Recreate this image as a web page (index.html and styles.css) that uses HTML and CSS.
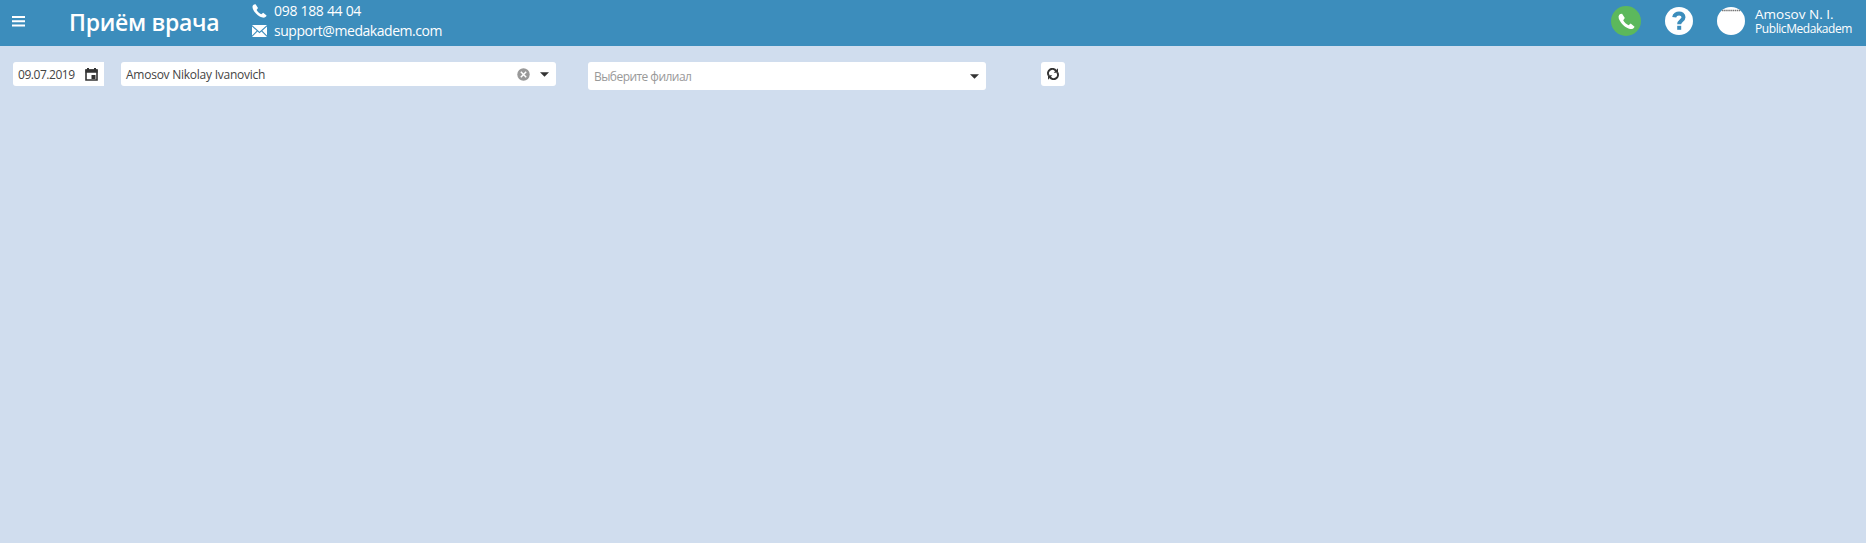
FILE: index.html
```html
<!DOCTYPE html>
<html lang="ru">
<head>
<meta charset="utf-8">
<title>Приём врача</title>
<link rel="stylesheet" href="styles.css">
</head>
<body>
<header class="topbar">
  <svg class="menu" viewBox="0 0 13 11"><path d="M0 1h13M0 5.300h13M0 9.600h13" stroke="#fff" stroke-width="2"/></svg>
  <h1 class="title">Приём врача</h1>
  <div class="contacts">
    <div class="contact">
      <svg viewBox="0 0 15 14"><path d="M2 .4C.2 1.400 0 3.600 1.500 6.200C3.500 9.800 7 12.800 10.600 13.600C12.400 14 14 13.200 14.600 11.600L11.200 8.800L9.300 10.300C7.500 9.600 5.500 7.800 4.600 6L6 4L3.600.2Z" fill="#fff"/></svg>
      <span class="phone">098 188 44 04</span>
    </div>
    <div class="contact">
      <svg viewBox="0 0 15 13"><path d="M0 0.500H15L7.500 7.300ZM0 2L4.700 6.300L0 11ZM15 2L10.300 6.300L15 11ZM5.500 7L7.500 8.800L9.500 7L15 12.500H0Z" fill="#fff"/></svg>
      <span class="email">support@medakadem.com</span>
    </div>
  </div>
  <div class="account">
    <div class="circle call"><svg viewBox="0 0 15 14"><path d="M2 .4C.2 1.400 0 3.600 1.500 6.200C3.500 9.800 7 12.800 10.600 13.600C12.400 14 14 13.200 14.600 11.600L11.200 8.800L9.300 10.300C7.500 9.600 5.500 7.800 4.600 6L6 4L3.600.2Z" fill="#fff"/></svg></div>
    <div class="circle help"><svg viewBox="0 0 28 28"><path d="M9.200 10.200C9.800 5.200 18.500 5.200 18.500 10.300C18.500 13.500 14.200 13.500 14.200 17.200" fill="none" stroke="#3c8dbc" stroke-width="4"/><path d="M12.200 18.800h4v4h-4z" fill="#3c8dbc"/></svg></div>
    <div class="circle avatar"><svg viewBox="0 0 28 28"><path d="M5 3.500H23" stroke="#777" stroke-width="1.500" stroke-dasharray="1.500 .6"/></svg></div>
    <div class="user"><span class="name">Amosov N. I.</span><span class="org">PublicMedakadem</span></div>
  </div>
</header>
<main class="filters">
  <div class="field date"><span class="datetext">09.07.2019</span>
    <svg class="calendar" viewBox="0 0 13 13"><path d="M1 2h11v10H1z" fill="none" stroke="#333" stroke-width="1.600"/><path d="M.5 1.500h12v3.300H.5zM2 0h2v2H2zM9 0h2v2H9zM6.500 7h4v4h-4z" fill="#333"/></svg></div>
  <div class="field doctor"><span class="doctext">Amosov Nikolay Ivanovich</span>
    <svg class="clear" viewBox="0 0 13 13"><circle cx="6.500" cy="6.500" r="6.200" fill="#999"/><path d="M3.800 3.800l5.400 5.400M9.200 3.800L3.800 9.200" stroke="#fff" stroke-width="1.500"/></svg>
    <svg class="caret" viewBox="0 0 8 4"><path d="M0 0h8L4 4z" fill="#333"/></svg></div>
  <div class="field branch"><span class="placeholder">Выберите филиал</span>
    <svg class="caret" viewBox="0 0 8 4"><path d="M0 0h8L4 4z" fill="#333"/></svg></div>
  <div class="field refresh"><svg viewBox="0 0 12 12"><path d="M1.700 7.500A4.300 4.300 0 0 1 9 2.900M10.300 4.500A4.300 4.300 0 0 1 3 9.100" fill="none" stroke="#333" stroke-width="2"/><path d="M11 .3V4.800H6.700ZM1 11.700V7.200H5.300Z" fill="#333"/></svg></div>
</main>
</body>
</html>
```

FILE: styles.css
```css
* { box-sizing: border-box; }
body { margin: 0; height: 543px; background: #d0ddee; font-family: "Open Sans", "Noto Sans", sans-serif; color: #444; overflow: hidden; }
svg { display: block; flex: none; }
span { white-space: nowrap; }
.topbar { height: 46px; background: #3c8dbc; color: #fff; display: flex; align-items: flex-start; padding: 0 14px 0 12px; }
.menu { width: 13px; height: 11px; margin-top: 16px; }
.title { margin: 6px 0 0 44px; width: 183px; font-size: 23px; line-height: 32px; font-weight: 600; letter-spacing: -0.3px; white-space: nowrap; }
.contacts { padding-top: 1px; }
.contact { display: flex; align-items: center; gap: 7px; height: 20px; font-size: 14px; line-height: 20px; }
.contact svg { width: 15px; height: 14px; }
.phone { letter-spacing: -0.3px; }
.email { letter-spacing: -0.45px; }
.account { margin-left: auto; display: flex; align-items: flex-start; }
.circle { width: 28px; height: 28px; margin-top: 7px; border-radius: 50%; background: #fff; display: flex; align-items: center; justify-content: center; }
.call { width: 30px; height: 30px; margin-top: 6px; background: #5cb85c; }
.call svg { width: 17px; height: 17px; }
.help { margin-left: 24px; }
.avatar { margin-left: 24px; }
.user { width: 97px; margin-left: 10px; padding-top: 6px; display: flex; flex-direction: column; }
.name { font-size: 13.500px; line-height: 16px; }
.org { font-size: 12px; line-height: 14px; letter-spacing: -0.43px; }
.filters { display: flex; align-items: flex-start; padding: 16px 13px; font-size: 12px; }
.field { height: 24px; background: #fff; border-radius: 3px; display: flex; align-items: center; padding: 0 5px; }
.date { width: 91px; padding-right: 6px; justify-content: space-between; border-radius: 3px 0 0 3px; }
.datetext { letter-spacing: -0.45px; }
.doctext { letter-spacing: -0.25px; }
.calendar { width: 13px; height: 13px; }
.doctor { width: 435px; margin-left: 17px; }
.clear { width: 13px; height: 13px; margin-left: auto; margin-right: 10px; }
.caret { width: 9px; height: 5px; margin-right: 2px; }
.branch { width: 398px; height: 28px; margin-left: 32px; padding-left: 6px; justify-content: space-between; }
.placeholder { color: #999; letter-spacing: -0.55px; }
.refresh { width: 24px; margin-left: 55px; padding: 0; justify-content: center; }
.refresh svg { width: 12px; height: 12px; }
```
